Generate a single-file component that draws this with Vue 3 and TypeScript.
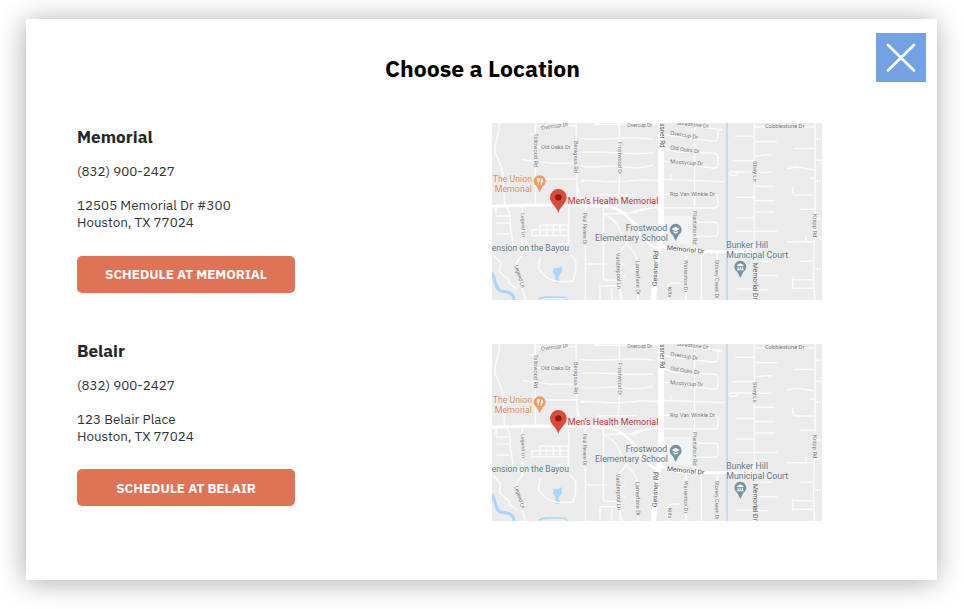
<script setup lang="ts">
interface Place {
  name: string
  phone: string
  street: string
  city: string
}

interface Label {
  t: string
  x: number
  y: number
  w: number
  s?: number
  r?: number
  k?: string
}

const places: Place[] = [
  { name: 'Memorial', phone: '(832) 900-2427', street: '12505 Memorial Dr #300', city: 'Houston, TX 77024' },
  { name: 'Belair', phone: '(832) 900-2427', street: '123 Belair Place', city: 'Houston, TX 77024' },
]

const lanes: string[] = [
  'M28 12C32 40 8 80 16 102C26 128 36 140 38 162L44 258',
  'M136 12V258', 'M258 12L262 256', 'M388 12V190L382 262',
  'M118 45H136V20H258', 'M136 83H258', 'M97 122L190 133H258', 'M136 180H258',
  'M318 16H400L505 14', 'M270 58C330 68 380 50 490 60', 'M276 100C340 96 420 108 490 102',
  'M275 142C310 150 350 136 388 142S460 148 490 138', 'M276 185C320 182 370 194 420 186S480 184 510 185',
  'M318 230C350 222 380 232 440 226', 'M262 205L276 252',
  'M512 46L665 66Q684 68 684 55V36L698 30', 'M560 16L698 32',
  'M512 85L560 98L668 102Q684 102 684 115V138Q682 150 668 147L512 125',
  'M512 181L705 188', 'M542 164V180', 'M512 226H670Q684 226 684 238V256Q684 267 670 267L512 266Q450 266 420 282L340 284',
  'M614 12V290', 'M614 310H672Q684 310 684 320V342Q684 352 672 352H614', 'M614 290V395',
  'M793 12V543', 'M975 12V290L970 460L974 543',
  'M793 24H975', 'M735 52H793', 'M793 68H862', 'M793 112L826 107H846', 'M725 125H793',
  'M793 160H844M793 160L740 158M745 161Q742 169 732 169H722Q713 162 722 159H745',
  'M793 202H855', 'M740 235H793', 'M793 245H855', 'M738 297H793', 'M793 279H855', 'M738 337H793', 'M793 337H862',
  'M912 88H975', 'M890 150L920 144L975 153', 'M908 203V218Q908 228 920 228H975', 'M975 61H992M975 124H995M958 178H975M975 187H992M930 271H975',
  'M890 368H975M948 350V367', 'M975 300H992M975 357H992M975 449H992',
  'M740 510H793', 'M793 470H862M793 427H845M793 512H835',
  'M908 475V512M908 482H972M908 508H972M930 427H972',
  'M97 264V405L83 425C60 460 105 480 97 512L108 543',
  'M50 262C65 285 58 300 63 335C72 365 58 390 97 395',
  'M18 291H58M18 312H62M20 345H58M18 265V285',
  'M8 405C26 425 38 430 28 450C25 470 70 480 55 490L80 510',
  'M236 264C240 310 232 340 236 375H200', 'M150 318H235V350H125V332H235M150 318V350M170 318V350M190 318V350M210 318V350',
  'M150 415L145 450C175 485 190 492 250 486L257 455V425L240 405',
  'M286 264V543', 'M286 435H352', 'M340 264V475Q340 484 350 484H395', 'M340 286C390 305 385 335 410 375C440 410 444 410 444 470V543',
  'M420 360L385 405V470L390 515L398 543', 'M385 436H405M385 470H405',
  'M330 543V500H390V543M365 505V543', 'M430 288C440 270 480 275 505 258',
  'M588 398V543', 'M634 398V543', 'M682 398V543', 'M535 543V500Q537 492 550 492H570',
]

const labels: Label[] = [
  { t: 'Overcup Dr', x: 154, y: 32, w: 82, r: -8 },
  { t: 'Overcup Dr', x: 412, y: 23, w: 74, s: 16 },
  { t: 'Old Oaks Dr', x: 153, y: 89, w: 89 },
  { t: 'Tallowood Rd', x: 131, y: 43, w: 101, r: 90 },
  { t: 'Benignus Rd', x: 252, y: 66, w: 96, r: 90 },
  { t: 'Frostwood Dr', x: 383, y: 69, w: 98, r: 90 },
  { t: 'ssner Rd', x: 509, y: 13, w: 73, s: 19, r: 90, k: 'main' },
  { t: 'bblestone Dr', x: 560, y: 17, w: 96, r: 6 },
  { t: 'Overcup Dr', x: 540, y: 47, w: 84, r: 9 },
  { t: 'Old Oaks Dr', x: 540, y: 91, w: 89, r: 8 },
  { t: 'Mossycup Dr', x: 540, y: 133, w: 99, r: 4 },
  { t: 'Rip Van Winkle Dr', x: 540, y: 232, w: 136 },
  { t: 'Cobblestone Dr', x: 825, y: 28, w: 118 },
  { t: 'Strey Ln', x: 788, y: 126, w: 62, r: 90 },
  { t: 'Knipp Rd', x: 970, y: 285, w: 70, r: 90 },
  { t: 'Plantation Rd', x: 608, y: 276, w: 101, r: 90 },
  { t: 'Warrenton Dr', x: 583, y: 422, w: 98, r: 90 },
  { t: 'Stoney Creek Dr', x: 676, y: 422, w: 118, r: 90 },
  { t: 'Kilts', x: 534, y: 503, w: 32, r: 90 },
  { t: 'Memorial Dr', x: 790, y: 432, w: 110, s: 19, r: 90, k: 'main' },
  { t: 'Memorial Dr', x: 530, y: 392, w: 113, s: 19, r: 6, k: 'main' },
  { t: 'Gessner Rd', x: 500, y: 502, w: 106, s: 20, r: -87, k: 'main' },
  { t: 'Paul Revere Dr', x: 280, y: 281, w: 97, s: 14, r: 90 },
  { t: 'Legend Ln', x: 93, y: 283, w: 71, s: 15, r: 88 },
  { t: 'Legend Ln', x: 73, y: 440, w: 70, s: 16, r: 72, k: 'main' },
  { t: 'Vanderpool Ln', x: 378, y: 402, w: 108, r: 88 },
  { t: 'Lamerlane Dr', x: 437, y: 425, w: 103, r: 89 },
  { t: 'The Union', x: 8, y: 190, w: 118, s: 25, k: 'food' },
  { t: 'Memorial', x: 14, y: 219, w: 112, s: 25, k: 'food' },
  { t: 'Men’s Health Memorial', x: 233, y: 256, w: 272, s: 26, k: 'clinic' },
  { t: 'Frostwood', x: 407, y: 336, w: 125, s: 25, k: 'civic' },
  { t: 'Elementary School', x: 315, y: 365, w: 219, s: 25, k: 'civic' },
  { t: 'Bunker Hill', x: 709, y: 388, w: 125, s: 25, k: 'civic' },
  { t: 'Municipal Court', x: 709, y: 416, w: 185, s: 25, k: 'civic' },
  { t: 'ension on the Bayou', x: 5, y: 396, w: 232, s: 25, k: 'civic' },
]
</script>

<template>
  <main class="stage">
    <section class="dialog">
      <header class="top">
        <h1>Choose a Location</h1>
        <button class="close" aria-label="Close">
          <svg width="50" height="49" viewBox="0 0 50 49">
            <path d="M12 12L38 37.500M38 12L12 37.500" />
          </svg>
        </button>
      </header>
      <div class="list">
        <article v-for="p in places" :key="p.name" class="place">
          <div class="info">
            <h2>{{ p.name }}</h2>
            <p class="phone">{{ p.phone }}</p>
            <p class="address">{{ p.street }}<br />{{ p.city }}</p>
            <button class="book">SCHEDULE AT {{ p.name.toUpperCase() }}</button>
          </div>
          <svg class="map" viewBox="6 12 990 531" preserveAspectRatio="none">
            <rect class="land" x="6" y="12" width="990" height="531" />
            <path class="campus" d="M522 290H606V378L522 370Z" />
            <path class="water" d="M190 446L204 448L216 441L215 460L206 472V481L216 489L196 491V472L189 460Z" />
            <path class="stream" d="M6 462C18 480 14 510 32 516C52 518 72 522 72 543" />
            <path class="stream thin" d="M146 543C152 530 190 534 225 535L234 543M711 12V543" />
            <path v-for="(d, i) in lanes" :key="i" class="lane" :d="d" />
            <circle class="end" cx="277" cy="185" r="5" />
            <circle class="end" cx="318" cy="15" r="5" />
            <path class="road" d="M6 262L130 258L300 260L360 263C400 274 412 295 440 320M515 381C560 397 590 398 650 398H793" />
            <path class="street" d="M430 316L455 350C468 370 485 382 510 392" />
            <path class="avenue" d="M513 12V345C510 380 503 395 500 430L490 543" />
            <text
              v-for="(l, i) in labels"
              :key="'l' + i"
              :class="l.k || 'minor'"
              :font-size="l.s || 17"
              :textLength="l.w"
              lengthAdjust="spacingAndGlyphs"
              :transform="`translate(${l.x} ${l.y}) rotate(${l.r || 0})`"
            >{{ l.t }}</text>
            <g transform="translate(149 187)">
              <path class="orange" d="M0 33L-9 15A18 18 0 1 1 9 15Z" />
              <path class="fork" d="M-7 -9V-3Q-7 1 -4 1T-1 -3V-9M-4 -9V10M5 10V-8Q9 -6 9 2H5" />
            </g>
            <g transform="translate(557 333)">
              <path class="slate" d="M0 33L-9 15A18 18 0 1 1 9 15Z" />
              <path class="glyph" d="M-12 -3L0 -10L12 -3L0 4ZM-7 3V7Q0 14 7 7V3L0 7Z" />
            </g>
            <g transform="translate(751 444)">
              <path class="slate" d="M0 33L-9 15A18 18 0 1 1 9 15Z" />
              <path class="glyph" d="M-10 -5L0 -11L10 -5V-3H-10ZM-8 -1H-5V6H-8ZM-1.500 -1H1.500V6H-1.500ZM5 -1H8V6H5ZM-10 7H10V10H-10Z" />
            </g>
            <path class="marker" d="M205 282C202 265 180 254 180 235A25 25 0 0 1 230 235C230 254 208 265 205 282Z" />
            <circle class="dot" cx="205" cy="235" r="9.500" />
          </svg>
        </article>
      </div>
    </section>
  </main>
</template>

<style>
body {
  margin: 0;
  background: #fff;
}
</style>

<style scoped>
.stage {
  box-sizing: border-box;
  width: 964px;
  height: 609px;
  padding: 19px 27px 29px 26px;
  overflow: hidden;
  font-family: 'IBM Plex Sans', 'Noto Sans', sans-serif;
}
.dialog {
  height: 561px;
  background: #fff;
  box-shadow: -1px 2px 26px rgba(0, 0, 0, 0.33);
}
.top {
  display: grid;
  grid-template-columns: 62px 1fr 60px;
  height: 104px;
}
h1 {
  grid-column: 2;
  margin: 33px 0 0;
  font-size: 23px;
  line-height: 32px;
  font-weight: 700;
  color: #000;
  text-align: center;
}
.close {
  width: 50px;
  height: 49px;
  margin: 14px 0 0 -1px;
  padding: 0;
  border: 0;
  background: #73a2e4;
}
.close svg {
  display: block;
}
.close path {
  fill: none;
  stroke: #fff;
  stroke-width: 2.7;
  stroke-linecap: round;
}
.list {
  padding-left: 51px;
}
.place {
  display: grid;
  grid-template-columns: 415px 330px;
  height: 221px;
}
.place + .place .info {
  margin-top: -7px;
}
.info {
  color: #333;
}
h2 {
  margin: 2px 0 0;
  font-size: 17.2px;
  line-height: 24px;
  font-weight: 700;
  color: #262626;
}
p {
  margin: 0;
  font-size: 13.4px;
  line-height: 17px;
}
.phone {
  margin-top: 14px;
}
.address {
  margin-top: 17px;
}
.book {
  display: block;
  width: 218px;
  height: 36.6px;
  margin-top: 25px;
  padding: 0;
  border: 0;
  border-radius: 5px;
  background: #de7356;
  color: #fff;
  font-family: inherit;
  font-size: 13.4px;
  font-weight: 700;
}
.place + .place .book {
  margin-top: 24.4px;
}
.map {
  width: 330px;
  height: 177px;
  font-family: Roboto, sans-serif;
}
.land {
  fill: #ebebec;
}
.campus {
  fill: #f1f3f5;
}
.water {
  fill: #aad5fd;
}
.stream {
  fill: none;
  stroke: #aad5fd;
  stroke-width: 9;
}
.stream.thin {
  stroke-width: 4;
}
.lane {
  fill: none;
  stroke: #fbfbfb;
  stroke-width: 4.5;
  stroke-linejoin: round;
}
.end {
  fill: #fff;
}
.road,
.street,
.avenue {
  fill: none;
  stroke: #fff;
  stroke-width: 9;
}
.street {
  stroke-width: 7;
}
.avenue {
  stroke-width: 17;
}
text {
  stroke: #f4f4f4;
  stroke-width: 2px;
  paint-order: stroke;
}
.minor {
  fill: #737373;
}
.main {
  fill: #555;
}
.food {
  fill: #e18b58;
}
.clinic {
  fill: #c5302b;
}
.civic {
  fill: #5b7686;
}
.orange {
  fill: #f29b61;
}
.slate {
  fill: #7593a5;
}
.fork {
  fill: none;
  stroke: #fff;
  stroke-width: 2.8;
}
.glyph {
  fill: #fff;
}
.marker {
  fill: #dc4a3e;
}
.dot {
  fill: #8c1c16;
}
</style>
